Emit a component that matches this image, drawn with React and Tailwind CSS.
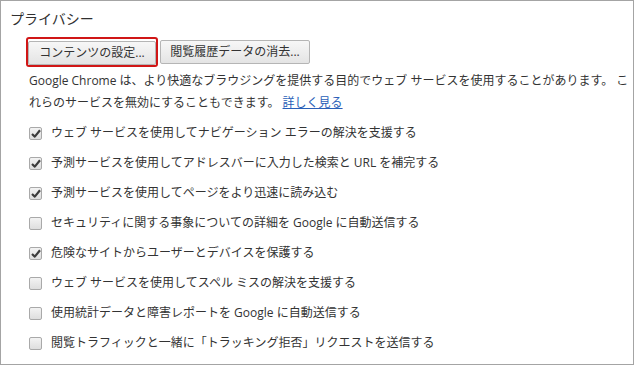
import React from 'react';

const rows = [
    { label: 'ウェブ サービスを使用してナビゲーション エラーの解決を支援する', checked: true },
    { label: '予測サービスを使用してアドレスバーに入力した検索と URL を補完する', checked: true },
    { label: '予測サービスを使用してページをより迅速に読み込む', checked: true },
    { label: 'セキュリティに関する事象についての詳細を Google に自動送信する', checked: false },
    { label: '危険なサイトからユーザーとデバイスを保護する', checked: true },
    { label: 'ウェブ サービスを使用してスペル ミスの解決を支援する', checked: false },
    { label: '使用統計データと障害レポートを Google に自動送信する', checked: false },
    { label: '閲覧トラフィックと一緒に「トラッキング拒否」リクエストを送信する', checked: false },
];

function Checkbox({ checked }) {
    return (
        <span className="w-[13px] h-[13px] shrink-0 rounded-[2px] border border-[#a9a9a9] bg-gradient-to-b from-[#f3f3f3] to-[#dedede] flex items-center justify-center">
            {checked && (
                <svg width="10" height="9" viewBox="0 0 10 9">
                    <path d="M1 5 L3.8 7.6 L9 1.3" fill="none" stroke="#3c3c3c" strokeWidth="2.2" strokeLinejoin="round" />
                </svg>
            )}
        </span>
    );
}

function App() {
    return (
        <div
            className="w-[634px] h-[365px] border border-[#a4a4a4] bg-white text-[#333] overflow-hidden"
            style={{ fontFamily: '"Open Sans", "Noto Sans CJK JP", sans-serif' }}
        >
            {/* Heading */}
            <h2 className="pt-2 pl-[9px] text-[14px] leading-5 text-[#303030]">プライバシー</h2>

            {/* Buttons */}
            <div className="mt-2 pl-[25px] flex items-center gap-[2px]">
                <div className="border-2 border-[#d01616] rounded-[3px]">
                    <button className="w-[128px] h-[24px] border border-[#b5b5b5] rounded-[2px] bg-gradient-to-b from-[#f7f7f7] to-[#e4e4e4] text-[12px] text-[#333]">
                        コンテンツの設定...
                    </button>
                </div>
                <button className="w-[150px] h-[24px] border border-[#b5b5b5] rounded-[2px] bg-gradient-to-b from-[#f7f7f7] to-[#e4e4e4] text-[12px] text-[#333]">
                    閲覧履歴データの消去...
                </button>
            </div>

            {/* Description */}
            <div className="mt-[3px] pl-[28px] text-[12px] leading-[22px]">
                <span className="block whitespace-nowrap">
                    Google Chrome は、より快適なブラウジングを提供する目的でウェブ サービスを使用することがあります。 こ
                </span>
                <span className="block whitespace-nowrap">
                    れらのサービスを無効にすることもできます。 <a href="#" className="text-[#2a5fb8] underline">詳しく見る</a>
                </span>
            </div>

            {/* Options */}
            <div className="mt-[4px] pl-[28px] flex flex-col">
                {rows.map((row) => (
                    <label key={row.label} className="h-[30px] flex items-center gap-[9px] text-[12px] whitespace-nowrap">
                        <Checkbox checked={row.checked} />
                        <span>{row.label}</span>
                    </label>
                ))}
            </div>
        </div>
    );
}

export default App;
